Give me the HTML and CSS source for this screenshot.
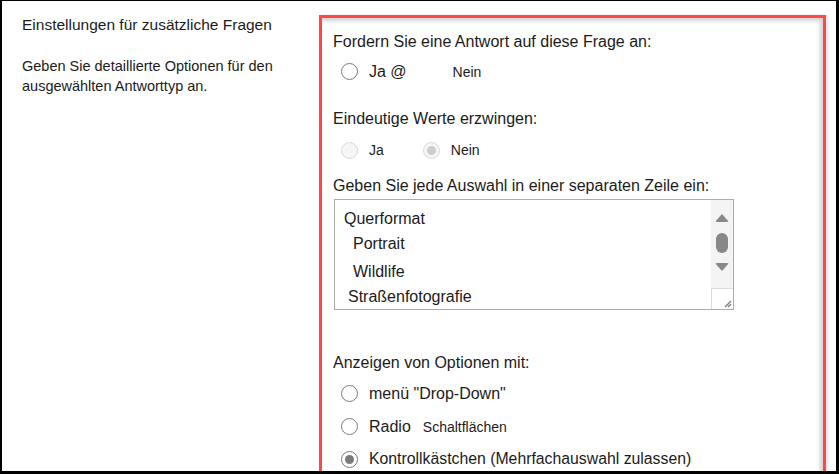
FILE: index.html
```html
<!DOCTYPE html>
<html lang="de">
<head>
<meta charset="utf-8">
<title>Einstellungen für zusätzliche Fragen</title>
<link rel="stylesheet" href="styles.css">
</head>
<body>
<div class="frame">
  <div class="side">
    <h2 class="side-title">Einstellungen für zusätzliche Fragen</h2>
    <p class="side-desc">Geben Sie detaillierte Optionen für den ausgewählten Antworttyp an.</p>
  </div>
  <div class="panel">
    <div class="label l-first">Fordern Sie eine Antwort auf diese Frage an:</div>
    <div class="row r-first">
      <span class="radio"></span>
      <span class="opt opt-ja">Ja @</span>
      <span class="opt small opt-nein1">Nein</span>
    </div>

    <div class="label l-second">Eindeutige Werte erzwingen:</div>
    <div class="row r-second">
      <span class="radio disabled"></span>
      <span class="opt small opt-ja2">Ja</span>
      <span class="radio disabled checked"></span>
      <span class="opt small opt-nein2">Nein</span>
    </div>

    <div class="label l-third">Geben Sie jede Auswahl in einer separaten Zeile ein:</div>
    <div class="textarea">
      <div class="ta-content">
        <div class="ta-line t1">Querformat</div>
        <div class="ta-line t2">Portrait</div>
        <div class="ta-line t3">Wildlife</div>
        <div class="ta-line t4">Straßenfotografie</div>
      </div>
      <div class="scrollbar">
        <div class="sb-track">
          <span class="arrow-up"></span>
          <span class="thumb"></span>
          <span class="arrow-down"></span>
        </div>
        <div class="resizer">
          <svg width="10" height="10" viewBox="0 0 10 10"><path d="M9 3 L3 9 M9 6 L6 9" stroke="#777" stroke-width="1.2" fill="none"/></svg>
        </div>
      </div>
    </div>

    <div class="label l-fourth">Anzeigen von Optionen mit:</div>
    <div class="row r-list">
      <span class="radio"></span>
      <span class="opt">menü "Drop-Down"</span>
    </div>
    <div class="row r-list">
      <span class="radio"></span>
      <span class="opt">Radio</span>
      <span class="opt small opt-schalt">Schaltflächen</span>
    </div>
    <div class="row r-list r-last">
      <span class="radio checked"></span>
      <span class="opt">Kontrollkästchen (Mehrfachauswahl zulassen)</span>
    </div>
  </div>
</div>
</body>
</html>
```

FILE: styles.css
```css
html, body {
  margin: 0;
  padding: 0;
  background: #fff;
}

.frame {
  width: 839px;
  height: 474px;
  box-sizing: border-box;
  border-style: solid;
  border-color: #000;
  border-width: 1px 3px 3px 2px;
  display: flex;
  font-family: "Liberation Sans", Arial, sans-serif;
  color: #1b1b1b;
  overflow: hidden;
}

.side {
  width: 317px;
  flex: none;
  box-sizing: border-box;
  padding: 14px 0 0 20px;
}

.side-title {
  margin: 0;
  font-size: 15.5px;
  line-height: 20px;
  font-weight: normal;
}

.side-desc {
  margin: 21px 0 0;
  font-size: 14.5px;
  line-height: 20px;
  width: 270px;
}

.panel {
  margin-top: 14px;
  width: 507px;
  height: 456px;
  flex: none;
  box-sizing: border-box;
  border: 3px solid #ff4747;
  border-bottom: none;
  padding: 14px 0 0 11px;
  box-shadow: inset -4px 4px 4px -1px rgba(0, 0, 0, 0.18), 2px 0 3px rgba(0, 0, 0, 0.12);
  display: flex;
  flex-direction: column;
  font-size: 16px;
  overflow: hidden;
}

.label {
  line-height: 20px;
  height: 20px;
  white-space: nowrap;
}

.l-second { margin-top: 25px; }
.l-third { margin-top: 14px; }
.l-fourth { margin-top: 43px; }

.row {
  display: flex;
  align-items: center;
  height: 24px;
  padding-left: 8px;
  white-space: nowrap;
}

.r-first { margin-top: 8px; }
.r-second { margin-top: 10px; }
.r-list { margin-top: 9px; }
.r-list.r-last { margin-top: 9px; }

.radio {
  width: 17px;
  height: 17px;
  box-sizing: border-box;
  border: 1.6px solid #7a7a7a;
  border-radius: 50%;
  background: #fff;
  display: flex;
  align-items: center;
  justify-content: center;
  flex: none;
  margin-right: 11px;
}

.radio.checked::after {
  content: "";
  width: 9px;
  height: 9px;
  border-radius: 50%;
  background: #7a7a7a;
}

.radio.disabled {
  border-color: #d8d8d8;
  background: #f6f6f6;
}

.radio.disabled.checked::after {
  background: #cdcdcd;
}

.opt {
  font-size: 16px;
  line-height: 20px;
}

.r-last .opt { font-size: 15.8px; }

.opt.small { font-size: 14px; }

.opt-nein1 { margin-left: 46px; }
.opt-ja2 { margin-right: 39px; }
.opt-schalt { margin-left: 12px; }

.textarea {
  margin-top: 3px;
  margin-left: 1px;
  width: 400px;
  height: 111px;
  box-sizing: border-box;
  border: 1px solid #ababab;
  display: flex;
  flex: none;
}

.ta-content {
  flex: 1;
  padding-top: 7px;
}

.ta-line {
  font-size: 16px;
  line-height: 24px;
  height: 24px;
  white-space: nowrap;
}

.t1 { padding-left: 9px; }
.t2 { padding-left: 18px; margin-top: 1px; }
.t3 { padding-left: 18px; margin-top: 4px; }
.t4 { padding-left: 13px; margin-top: 1px; }

.scrollbar {
  width: 22px;
  flex: none;
  display: flex;
  flex-direction: column;
  background: #f4f4f4;
}

.sb-track {
  flex: 1;
  display: flex;
  flex-direction: column;
  align-items: center;
  padding-top: 14px;
}

.arrow-up {
  width: 0;
  height: 0;
  border-left: 7px solid transparent;
  border-right: 7px solid transparent;
  border-bottom: 8px solid #888;
  border-radius: 2px;
}

.thumb {
  margin-top: 11px;
  width: 12px;
  height: 20px;
  border-radius: 6px;
  background: #888;
}

.arrow-down {
  margin-top: 10px;
  width: 0;
  height: 0;
  border-left: 7px solid transparent;
  border-right: 7px solid transparent;
  border-top: 8px solid #888;
  border-radius: 2px;
}

.resizer {
  height: 21px;
  box-sizing: border-box;
  border-top: 1px solid #dcdcdc;
  border-left: 1px solid #dcdcdc;
  background: #fff;
  display: flex;
  align-items: flex-end;
  justify-content: flex-end;
}

.resizer svg {
  display: block;
  margin: 0 1px 1px 0;
}
```
